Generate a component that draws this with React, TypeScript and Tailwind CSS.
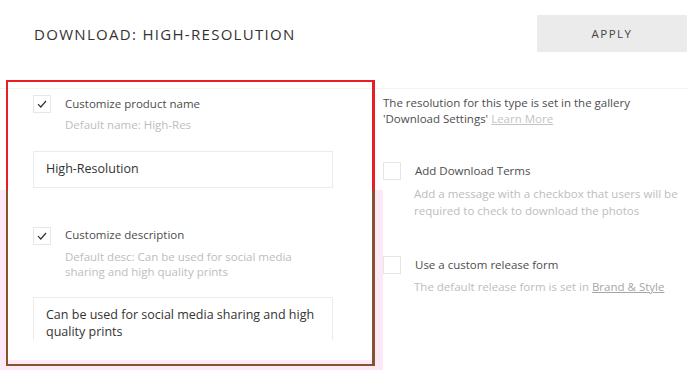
import React from "react";

const Check = ({ checked }: { checked?: boolean }) => (
  <div className="w-[18px] h-[18px] shrink-0 border border-[#e6e6e6] bg-white flex items-center justify-center">
    {checked && (
      <svg width="10" height="8" viewBox="0 0 10 8" fill="none">
        <path d="M1 4.2 L3.8 7 L9 1" stroke="#333" strokeWidth="1.2" />
      </svg>
    )}
  </div>
);

export default function App() {
  return (
    <div
      className="relative w-[688px] h-[375px] overflow-hidden bg-white text-[#4d4d4d]"
      style={{ fontFamily: "'Open Sans', 'Noto Sans', sans-serif" }}
    >
      {/* header */}
      <div className="h-[88px] flex items-start justify-between">
        <h1 className="mt-[24px] ml-[34px] text-[15px] tracking-[1.3px] text-[#333] leading-[20px] font-normal">
          DOWNLOAD: HIGH-RESOLUTION
        </h1>
        <button className="mt-[15px] w-[150px] h-[37px] mr-[1px] bg-[#ebebeb] text-[11.5px] tracking-[1.5px] text-[#444]">
          APPLY
        </button>
      </div>
      <div className="h-px bg-[#f3f3f3]" />

      {/* columns */}
      <div className="flex">
        <div className="w-[383px] shrink-0 pl-[33px] pr-[50px] h-[251px] overflow-hidden">
          <div className="mt-[6px] flex items-start gap-[14px]">
            <Check checked />
            <div className="text-[11.5px] leading-[18px]">Customize product name</div>
          </div>
          <div className="ml-[32px] mt-[3px] text-[11.5px] leading-[18px] text-[#bdbdbd]">
            Default name: High-Res
          </div>
          <div className="mt-[17px] h-[37px] border border-[#ebebeb] pl-[12px] flex items-center text-[12.5px] text-[#333]">
            High-Resolution
          </div>
          <div className="mt-[39px] flex items-start gap-[14px]">
            <Check checked />
            <div className="text-[11.5px] leading-[18px] -mt-[1px]">Customize description</div>
          </div>
          <div className="ml-[32px] mt-[4px] text-[11.5px] leading-[15px] text-[#bdbdbd]">
            Default desc: Can be used for social media
            <br />
            sharing and high quality prints
          </div>
          <div className="mt-[18px] h-[60px] border border-[#ebebeb] pl-[12px] pt-[8px] text-[12.5px] leading-[17px] text-[#333] whitespace-nowrap">
            Can be used for social media sharing and high
            <br />
            quality prints
          </div>
        </div>

        <div className="flex-1 pt-[6px] whitespace-nowrap">
          <div className="text-[11.5px] leading-[15.5px]">
            The resolution for this type is set in the gallery
            <br />
            'Download Settings'{" "}
            <span className="underline text-[#c4c4c4]">Learn More</span>
          </div>
          <div className="mt-[36px] flex items-start gap-[14px]">
            <Check />
            <div className="text-[11.5px] leading-[18px]">Add Download Terms</div>
          </div>
          <div className="ml-[31px] mt-[5px] text-[11.5px] leading-[17px] text-[#bdbdbd]">
            Add a message with a checkbox that users will be
            <br />
            required to check to download the photos
          </div>
          <div className="mt-[37px] flex items-start gap-[14px]">
            <Check />
            <div className="text-[11.5px] leading-[18px]">Use a custom release form</div>
          </div>
          <div className="ml-[31px] mt-[4px] text-[11.5px] leading-[17px] text-[#bdbdbd]">
            The default release form is set in{" "}
            <span className="underline text-[#a6a6a6]">Brand &amp; Style</span>
          </div>
        </div>
      </div>

      {/* annotation overlays */}
      <div className="absolute left-0 top-[190px] w-[6px] h-[180px] bg-[#fde8f8]" />
      <div className="absolute left-[374px] top-[190px] w-[9px] h-[180px] bg-[#fde8f8]" />
      <div className="absolute left-[8px] top-[360px] w-[366px] h-[4px] bg-[#fde8f8]" />
      <div className="absolute left-0 top-[366px] w-[383px] h-[4px] bg-[#fde8f8]" />
      <div className="absolute left-[6px] top-[80px] w-[369px] h-[110px] border-[2px] border-r-[3px] border-b-0 border-[#ea1c24]" />
      <div className="absolute left-[6px] top-[190px] w-[369px] h-[176px] border-[2px] border-r-[3px] border-t-0 border-[#87532a]" />
    </div>
  );
}
